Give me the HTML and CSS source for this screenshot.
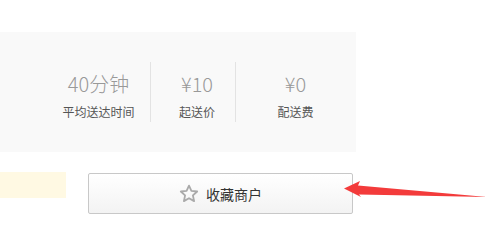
FILE: index.html
```html
<!DOCTYPE html>
<html>
    <head>
        <meta charset="UTF-8">
        <link rel="stylesheet" href="styles.css">
        <title>商户信息</title>
    </head>
    <body>
        <div class="shop">
            <div class="stats">
                <div class="stat stat-time">
                    <div class="stat-num">40分钟</div>
                    <div class="stat-label">平均送达时间</div>
                </div>
                <div class="stat stat-min">
                    <div class="stat-num">¥10</div>
                    <div class="stat-label">起送价</div>
                </div>
                <div class="stat stat-fee">
                    <div class="stat-num">¥0</div>
                    <div class="stat-label">配送费</div>
                </div>
            </div>
            <div class="actions">
                <div class="notice"></div>
                <button class="fav-btn">
                    <svg class="star" width="20" height="19" viewBox="0 0 20 19">
                        <path d="M10 1.6 L12.4 6.9 L18.2 7.5 L13.9 11.4 L15.1 17.1 L10 14.2 L4.9 17.1 L6.1 11.4 L1.8 7.5 L7.6 6.9 Z" fill="none" stroke="#aaa" stroke-width="1.8" stroke-linejoin="round"/>
                    </svg>
                    <span>收藏商户</span>
                </button>
            </div>
            <svg class="pointer" width="150" height="22" viewBox="0 0 150 22">
                <polygon points="4,10.5 20,3 18,7.5 147,19 19,16.5 21,19" fill="#f33b3b"/>
            </svg>
        </div>
    </body>
</html>
```

FILE: styles.css
```css
html, body {
    margin: 0;
    padding: 0;
    background: #fff;
    font-family: "Noto Sans CJK SC", "Liberation Sans", sans-serif;
}
.shop {
    position: relative;
    width: 499px;
    height: 247px;
    padding-top: 32px;
    box-sizing: border-box;
}
.stats {
    display: flex;
    align-items: center;
    width: 356px;
    height: 120px;
    padding-left: 47px;
    box-sizing: border-box;
    background: #f9f9f9;
}
.stat {
    height: 60px;
    padding-top: 10px;
    box-sizing: border-box;
    text-align: center;
}
.stat-time {
    width: 104px;
    border-right: 1px solid #e3e3e3;
}
.stat-min {
    width: 76px;
    padding-left: 8px;
    border-right: 1px solid #e3e3e3;
    box-sizing: content-box;
    height: 50px;
}
.stat-fee {
    width: 119px;
}
.stat-num {
    font-size: 20px;
    font-weight: 300;
    line-height: 24px;
    color: #999;
}
.stat-label {
    margin-top: 7px;
    font-size: 12px;
    line-height: 18px;
    color: #555;
}
.actions {
    display: flex;
    align-items: flex-start;
    margin-top: 20px;
}
.notice {
    width: 66px;
    height: 26px;
    background: #fff9e3;
}
.fav-btn {
    display: flex;
    align-items: center;
    justify-content: center;
    gap: 7px;
    width: 265px;
    height: 41px;
    margin: 1px 0 0 22px;
    padding: 0;
    border: 1px solid #c8c8c8;
    border-radius: 2px;
    background: linear-gradient(#fff, #f3f3f3);
    font-family: inherit;
    font-size: 14px;
    color: #333;
}
.star {
    display: block;
}
.pointer {
    position: absolute;
    left: 340px;
    top: 178px;
}
```
